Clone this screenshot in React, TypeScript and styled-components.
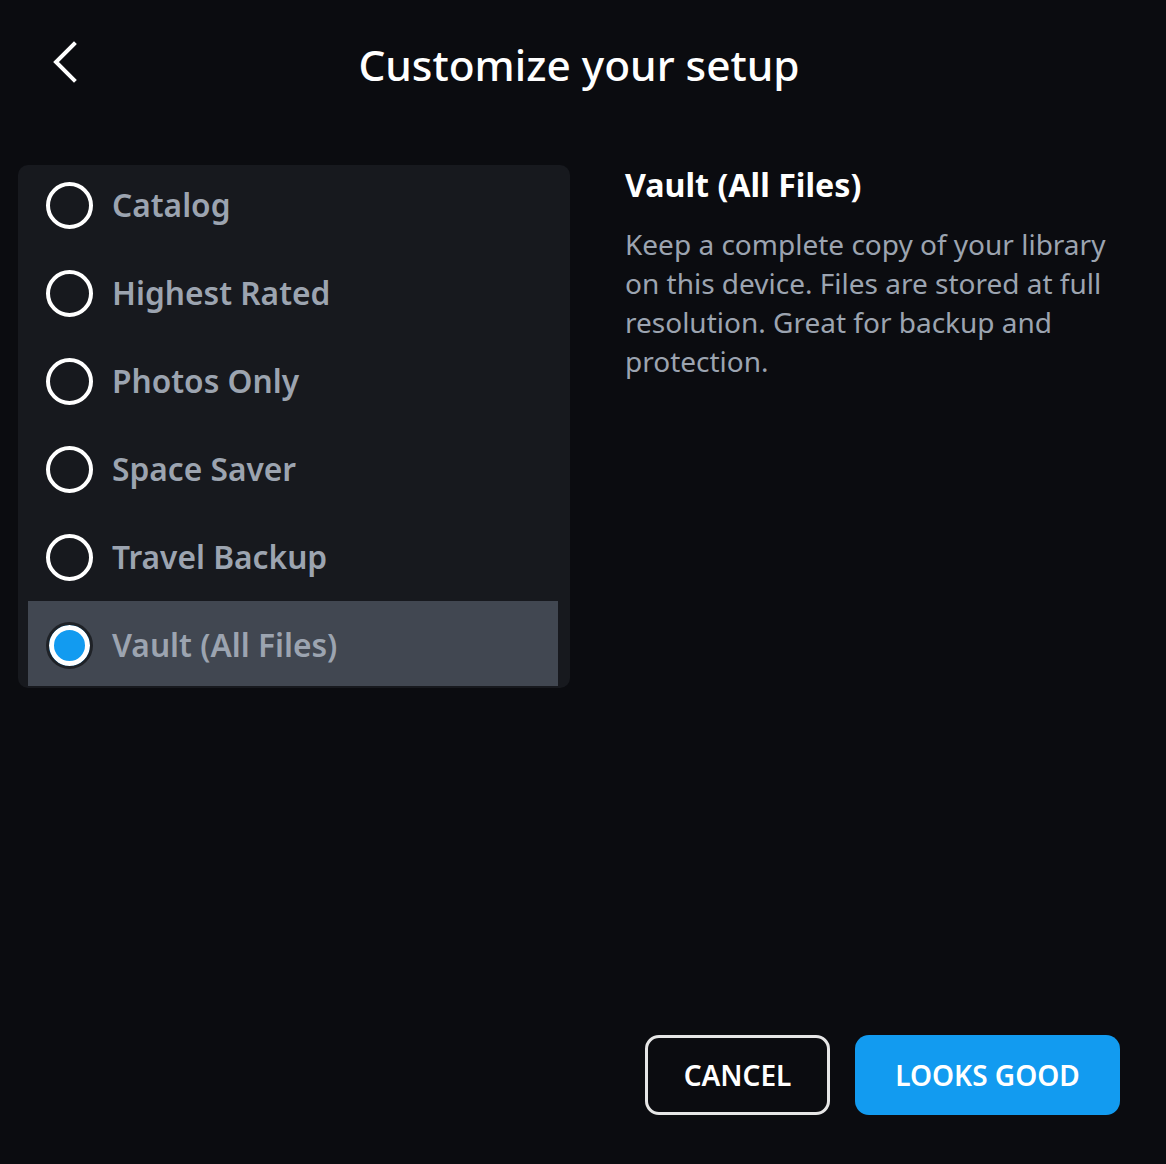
import React, { useState } from 'react';
import styled, { createGlobalStyle } from 'styled-components';

const GlobalStyle = createGlobalStyle`
  html, body {
    margin: 0;
    padding: 0;
    background: #0b0c10;
  }
  body {
    font-family: 'Noto Sans', 'Open Sans', sans-serif;
  }
`;

const Page = styled.div`
  min-height: 100vh;
  box-sizing: border-box;
  display: flex;
  flex-direction: column;
  padding: 0 46px 49px 18px;
  background: #0b0c10;
  color: #fff;
`;

const Header = styled.header`
  position: relative;
  height: 130px;
  display: flex;
  align-items: center;
  justify-content: center;
`;

const BackButton = styled.button`
  position: absolute;
  left: 23px;
  top: 38px;
  width: 48px;
  height: 48px;
  padding: 0;
  border: none;
  background: transparent;
  cursor: pointer;
  display: flex;
  align-items: center;
  justify-content: center;
`;

const Title = styled.h1`
  margin: 0 0 2px 20px;
  font-size: 42.4px;
  font-weight: 500;
  color: #ffffff;
`;

const Body = styled.main`
  margin-top: 35px;
  display: flex;
  align-items: flex-start;
  gap: 55px;
`;

const Panel = styled.div`
  width: 552px;
  height: 523px;
  flex-shrink: 0;
  box-sizing: border-box;
  padding: 0 12px 2px 10px;
  background: #17191e;
  border-radius: 10px;
  overflow: hidden;
`;

const OptionList = styled.ul`
  list-style: none;
  margin: -4px 0 0;
  padding: 0;
  display: flex;
  flex-direction: column;
  gap: 3px;
`;

const OptionRow = styled.li<{ $selected: boolean }>`
  height: 85px;
  display: flex;
  align-items: center;
  gap: 19px;
  padding-left: 18px;
  background: ${p => (p.$selected ? '#414751' : 'transparent')};
  cursor: pointer;
`;

const Radio = styled.span<{ $checked: boolean }>`
  box-sizing: border-box;
  width: 47px;
  height: 47px;
  border-radius: 50%;
  flex-shrink: 0;
  margin-top: ${p => (p.$checked ? '3px' : '4px')};
  border: ${p => (p.$checked ? '3px solid #1f2227' : '4px solid #ffffff')};
  background: ${p => (p.$checked ? '#129bf0' : 'transparent')};
  box-shadow: ${p => (p.$checked ? 'inset 0 0 0 5px #ffffff' : 'none')};
`;

const OptionLabel = styled.span`
  font-size: 31.7px;
  font-weight: 600;
  color: #9ca4b0;
  margin-top: 2px;
`;

const Detail = styled.section`
  flex: 1;
  min-width: 0;
`;

const DetailTitle = styled.h2`
  margin: 0;
  font-size: 32.2px;
  line-height: 39px;
  font-weight: 700;
  color: #ffffff;
`;

const DetailText = styled.p`
  margin: 21px 0 0;
  font-size: 28px;
  line-height: 39px;
  font-weight: 400;
  color: #9ca4b0;
`;

const Footer = styled.footer`
  margin-top: auto;
  display: flex;
  justify-content: flex-end;
  gap: 25px;
`;

const Button = styled.button<{ $primary?: boolean }>`
  height: 80px;
  box-sizing: border-box;
  padding: 0 30px;
  border-radius: 14px;
  font-family: 'Noto Sans', 'Open Sans', sans-serif;
  font-size: 28px;
  font-weight: 600;
  color: #ffffff;
  cursor: pointer;
  border: ${p => (p.$primary ? 'none' : '3px solid #e6e6e6')};
  background: ${p => (p.$primary ? '#129bf0' : '#0b0c10')};
  width: ${p => (p.$primary ? '265px' : '185px')};
`;

const options = [
  'Catalog',
  'Highest Rated',
  'Photos Only',
  'Space Saver',
  'Travel Backup',
  'Vault (All Files)',
];

const descriptions: Record<string, string> = {
  'Vault (All Files)':
    'Keep a complete copy of your library on this device. Files are stored at full resolution. Great for backup and protection.',
};

export default function App() {
  const [selected, setSelected] = useState('Vault (All Files)');

  return (
    <Page>
      <GlobalStyle />
      <Header>
        <BackButton aria-label="Back">
          <svg width="30" height="42" viewBox="0 0 30 42" fill="none">
            <path d="M24 3 L6 21 L24 39" stroke="#ffffff" strokeWidth="4" strokeLinecap="square" />
          </svg>
        </BackButton>
        <Title>Customize your setup</Title>
      </Header>

      <Body>
        <Panel>
          <OptionList>
            {options.map(name => (
              <OptionRow key={name} $selected={name === selected} onClick={() => setSelected(name)}>
                <Radio $checked={name === selected} />
                <OptionLabel>{name}</OptionLabel>
              </OptionRow>
            ))}
          </OptionList>
        </Panel>

        <Detail>
          <DetailTitle>{selected}</DetailTitle>
          <DetailText>{descriptions[selected] ?? ''}</DetailText>
        </Detail>
      </Body>

      <Footer>
        <Button>CANCEL</Button>
        <Button $primary>LOOKS GOOD</Button>
      </Footer>
    </Page>
  );
}
